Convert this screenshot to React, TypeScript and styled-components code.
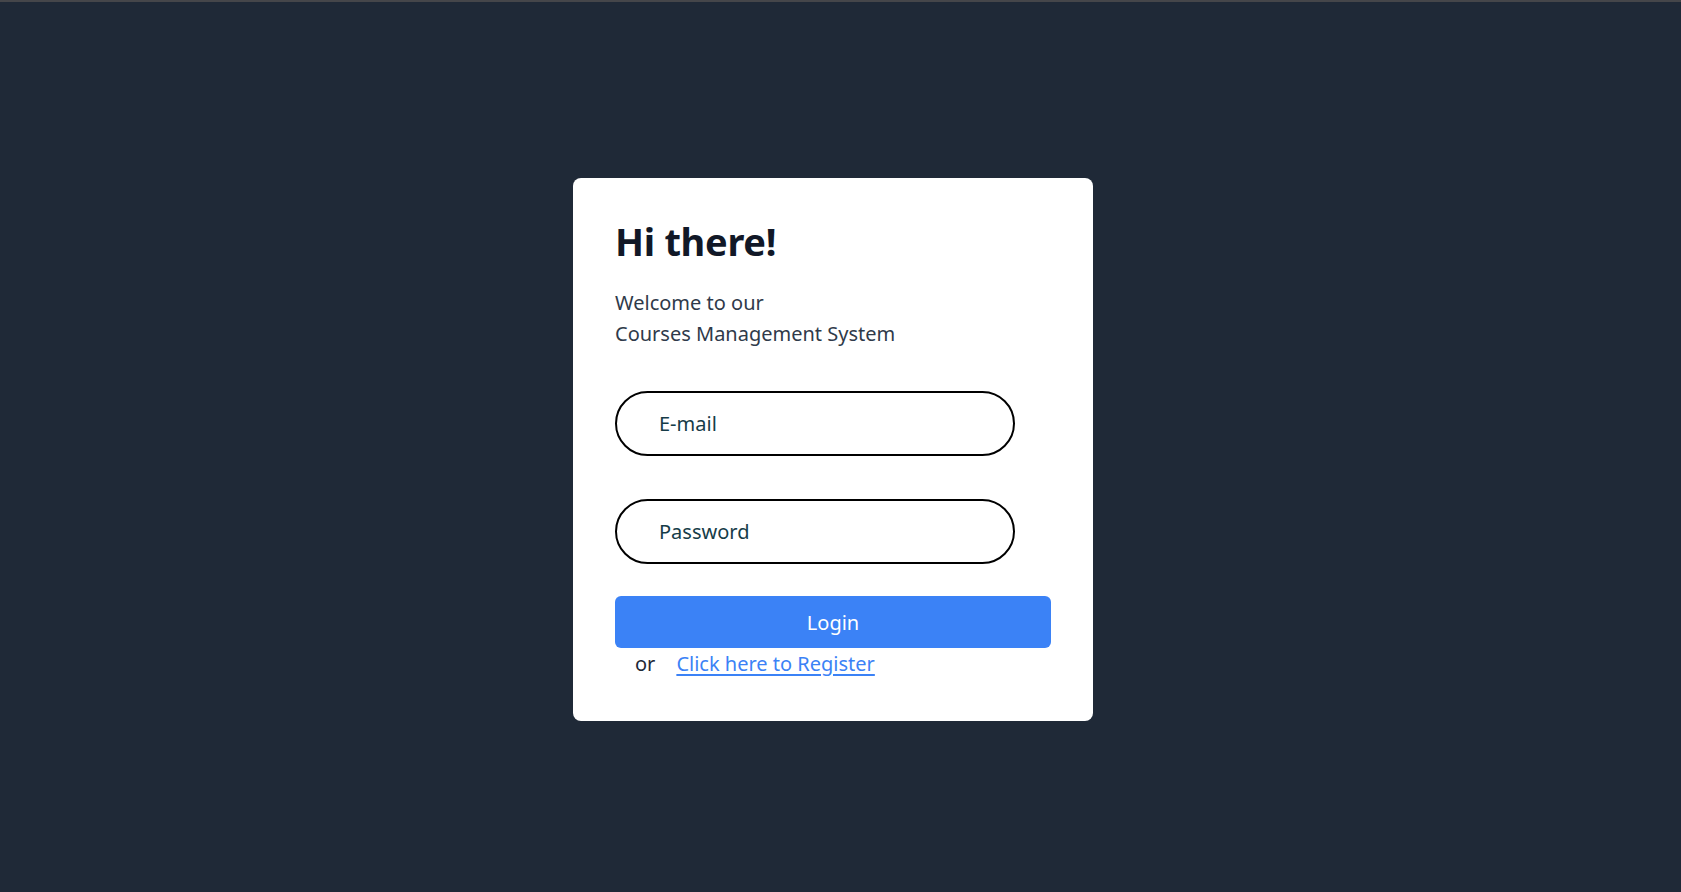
import React from "react";
import styled, { createGlobalStyle } from "styled-components";

const GlobalStyle = createGlobalStyle`
  *, *::before, *::after { box-sizing: border-box; }
  html, body { margin: 0; padding: 0; }
  body {
    background: #1f2937;
    font-family: "Noto Sans", "Open Sans", sans-serif;
    border-top: 2px solid #45464a;
  }
`;

const Page = styled.main`
  min-height: 890px;
  display: flex;
  justify-content: center;
  align-items: flex-start;
  padding: 176px 15px 0 0;
`;

const Card = styled.section`
  width: 520px;
  background: #ffffff;
  border-radius: 8px;
  padding: 40px 42px 43px 42px;
  display: flex;
  flex-direction: column;
`;

const Title = styled.h1`
  margin: 0;
  font-size: 38px;
  line-height: 46px;
  font-weight: 700;
  color: #111827;
  letter-spacing: -0.3px;
`;

const Intro = styled.p`
  margin: 23px 0 0 0;
  font-size: 20px;
  line-height: 31px;
  color: #2f3a4a;
`;

const Form = styled.form`
  display: flex;
  flex-direction: column;
  margin-top: 42px;
`;

const Field = styled.input<{ $gap?: number }>`
  width: 400px;
  height: 65px;
  margin-top: ${(p) => p.$gap ?? 0}px;
  border: 2px solid #000000;
  border-radius: 999px;
  padding: 0 20px 0 42px;
  font-family: inherit;
  font-size: 20px;
  color: #163c48;
  background: #ffffff;
  outline: none;

  &::placeholder {
    color: #163c48;
    opacity: 1;
  }
`;

const LoginButton = styled.button`
  margin-top: 32px;
  width: 100%;
  height: 52px;
  border: none;
  border-radius: 6px;
  background: #3b82f6;
  color: #ffffff;
  font-family: inherit;
  font-size: 20px;
  cursor: pointer;
`;

const RegisterRow = styled.div`
  margin-top: 2px;
  padding-left: 20px;
  display: flex;
  align-items: baseline;
  gap: 21px;
  font-size: 20px;
  line-height: 28px;
  color: #1f2937;
`;

const RegisterLink = styled.a`
  color: #3b82f6;
  text-decoration: underline;
  text-underline-offset: 3px;
`;

export default function App() {
  return (
    <>
      <GlobalStyle />
      <Page>
        <Card>
          <Title>Hi there!</Title>
          <Intro>
            Welcome to our
            <br />
            Courses Management System
          </Intro>
          <Form onSubmit={(e) => e.preventDefault()}>
            <Field type="email" placeholder="E-mail" />
            <Field type="password" placeholder="Password" $gap={43} />
            <LoginButton type="submit">Login</LoginButton>
          </Form>
          <RegisterRow>
            <span>or</span>
            <RegisterLink href="#">Click here to Register</RegisterLink>
          </RegisterRow>
        </Card>
      </Page>
    </>
  );
}
